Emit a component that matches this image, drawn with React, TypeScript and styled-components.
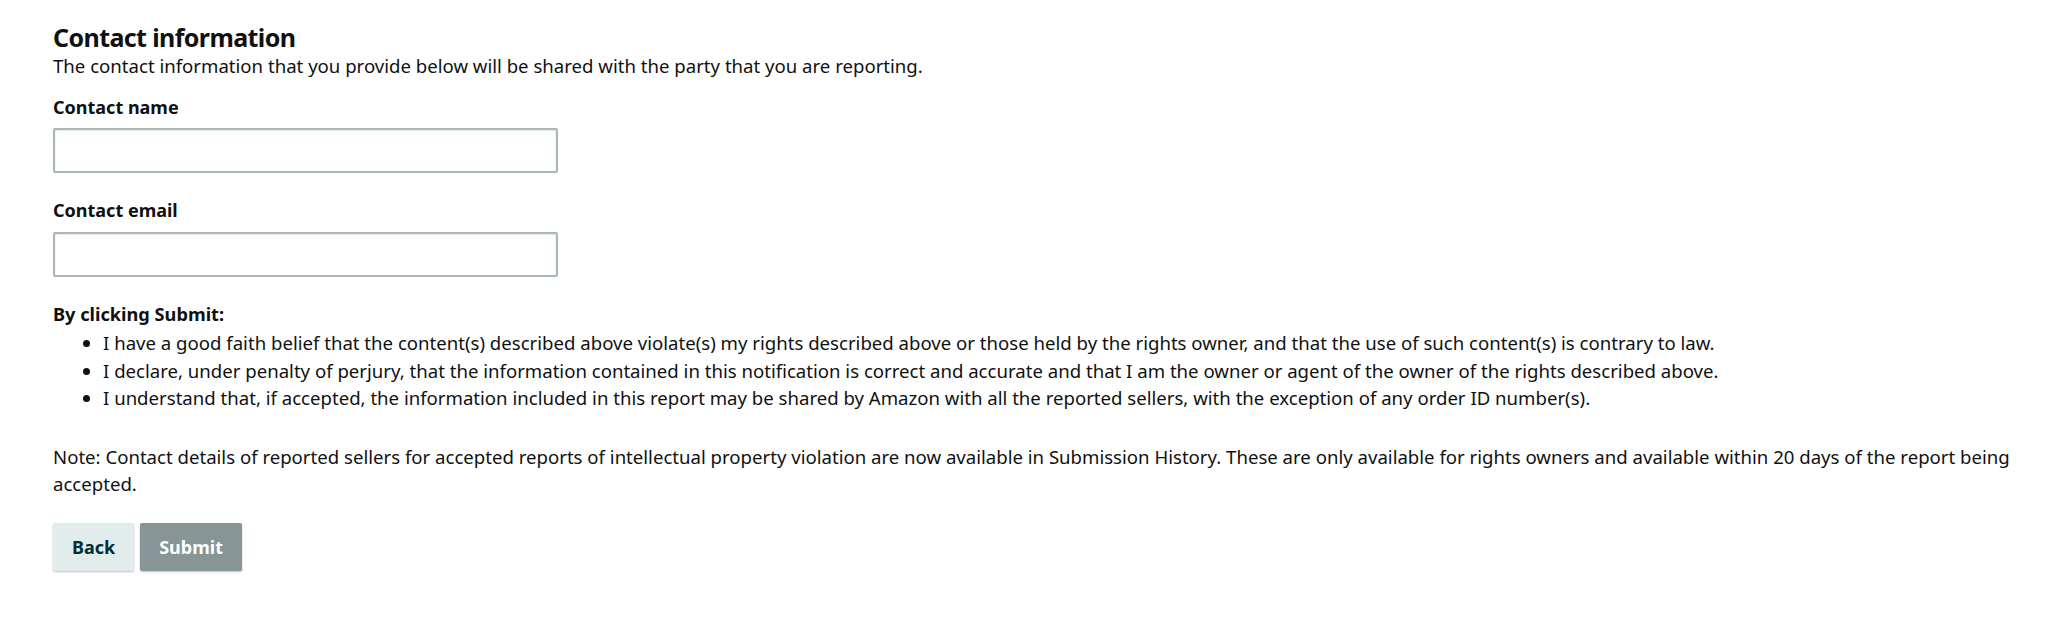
import React from 'react'
import styled, { createGlobalStyle } from 'styled-components'

const GlobalStyle = createGlobalStyle`
    body {
        margin:0;
        background:#ffffff;
        font-family:"Noto Sans", "Open Sans", Arial, sans-serif;
        color:#0f1111;
    }
`

const Page = styled.div`
    padding:22px 22px 40px 53px;
    font-size:18.6px;
    line-height:27.5px;
`

const Title = styled.h2`
    margin:0;
    font-size:25px;
    line-height:30px;
    font-weight:700;
    letter-spacing:-0.6px;
`

const Text = styled.p<{ $gap?: number }>`
    margin:${p => p.$gap || 0}px 0 0 0;
`

const Field = styled.div`
    margin-top:14px;
    & + & {
        margin-top:24px;
    }
`

const Label = styled.div`
    font-size:18px;
    font-weight:700;
    margin-bottom:7px;
`

const Input = styled.input`
    display:block;
    box-sizing:border-box;
    width:505px;
    height:45px;
    border:2px solid #aab7b8;
    border-radius:2px;
    box-shadow:inset 0 1px 2px rgba(0,0,0,0.12);
    background:#fff;
    font:inherit;
    padding:0 10px;
    outline:none;
`

const Terms = styled.div`
    margin-top:24px;
`

const Bold = styled.div`
    font-size:18.2px;
    font-weight:700;
`

const List = styled.ul`
    margin:1px 0 0 0;
    padding-left:50px;
`

const Actions = styled.div`
    display:flex;
    gap:6px;
    margin-top:25px;
`

const Button = styled.button<{ $primary?: boolean }>`
    height:48px;
    padding:0 19px;
    border:none;
    border-radius:2px;
    font-family:inherit;
    font-size:18px;
    font-weight:700;
    background:${p => p.$primary ? '#879596' : '#e3eced'};
    color:${p => p.$primary ? '#ffffff' : '#002f36'};
    box-shadow:0 1px 2px rgba(0,0,0,0.25);
    cursor:pointer;
`

const terms = [
    'I have a good faith belief that the content(s) described above violate(s) my rights described above or those held by the rights owner, and that the use of such content(s) is contrary to law.',
    'I declare, under penalty of perjury, that the information contained in this notification is correct and accurate and that I am the owner or agent of the owner of the rights described above.',
    'I understand that, if accepted, the information included in this report may be shared by Amazon with all the reported sellers, with the exception of any order ID number(s).',
]

const App: React.FC = () => {
    return <>
        <GlobalStyle />
        <Page>
            <Title>Contact information</Title>
            <Text>The contact information that you provide below will be shared with the party that you are reporting.</Text>
            <Field>
                <Label>Contact name</Label>
                <Input type="text" />
            </Field>
            <Field>
                <Label>Contact email</Label>
                <Input type="email" />
            </Field>
            <Terms>
                <Bold>By clicking Submit:</Bold>
                <List>
                    {terms.map((t, i) => <li key={i}>{t}</li>)}
                </List>
            </Terms>
            <Text $gap={31}>
                Note: Contact details of reported sellers for accepted reports of intellectual property violation are now available in Submission History. These are only available for rights owners and available within 20 days of the report being accepted.
            </Text>
            <Actions>
                <Button>Back</Button>
                <Button $primary disabled>Submit</Button>
            </Actions>
        </Page>
    </>
}

export default App
